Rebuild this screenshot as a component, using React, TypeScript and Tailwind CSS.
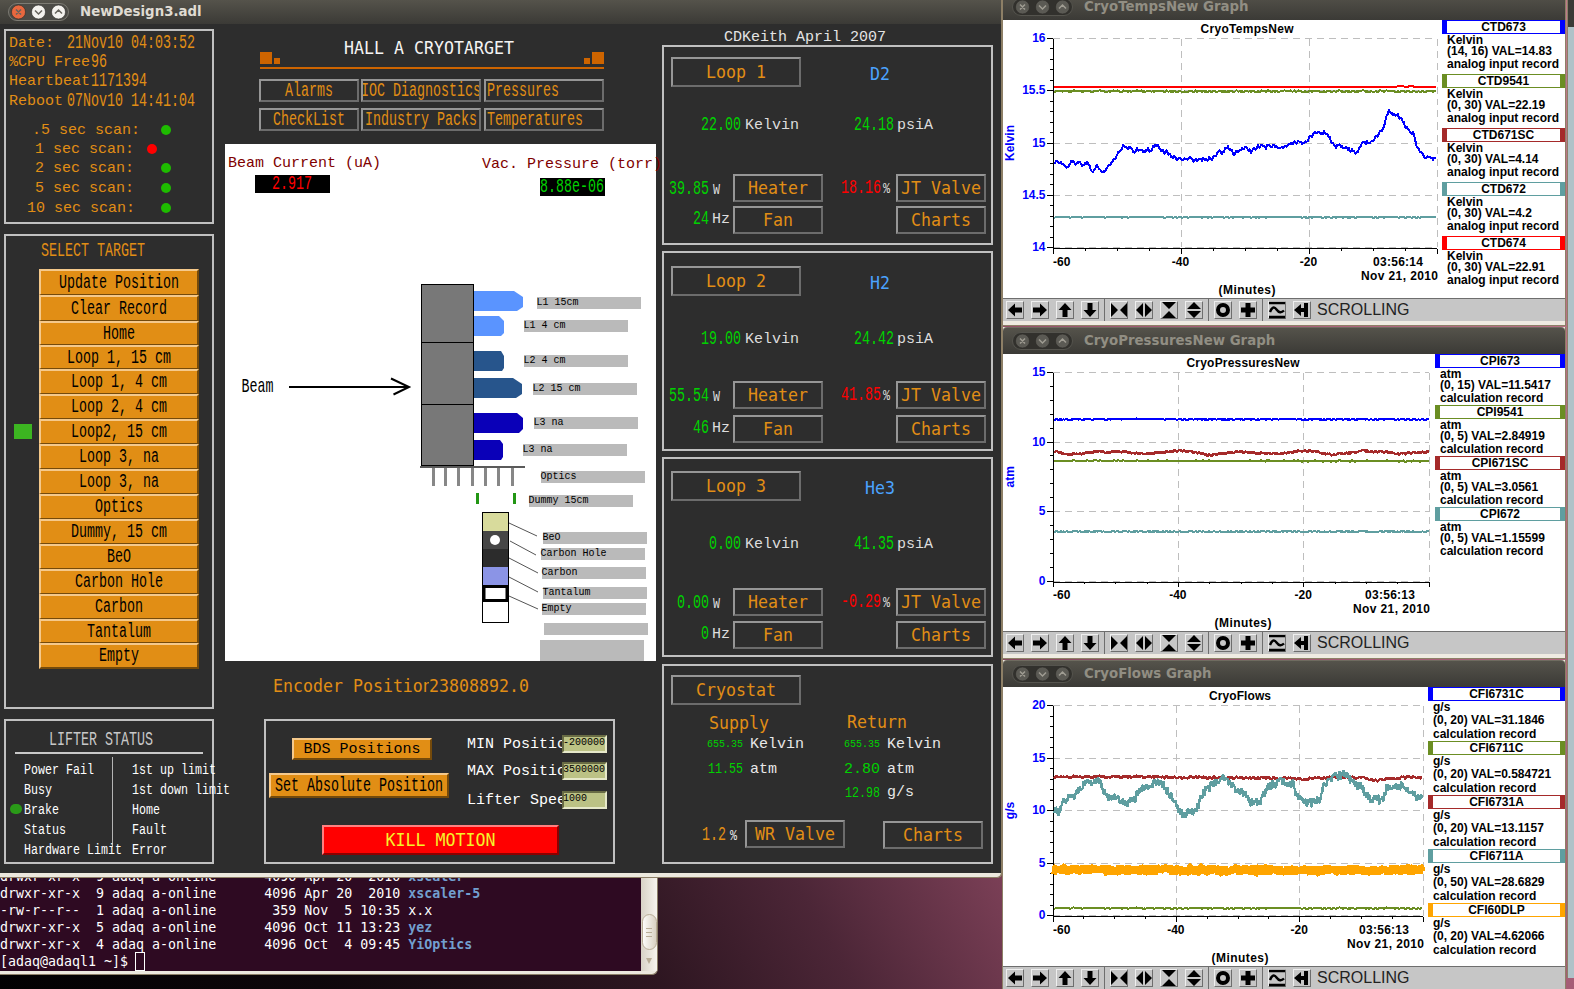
import type { ReactNode } from 'react'
import clsx from 'clsx'

// Fixed-advance screen fonts, keyed by cell width in pixels
const fonts = {
  6: "font-['Liberation_Mono',monospace] text-[10px] translate-y-px scale-y-110",
  7: "font-['Liberation_Mono',monospace] text-[11.67px] translate-y-px scale-y-[1.22]",
  8: "font-['Liberation_Mono',monospace] text-[13.33px] translate-y-px scale-y-[1.45]",
  9: "font-['Liberation_Mono',monospace] text-[15px] translate-y-px",
  10: "font-['DejaVu_Sans_Mono',monospace] text-[16.6px] translate-y-px scale-y-[1.07]",
}

type Cell = keyof typeof fonts

function T({ f, className, children }: { f: Cell; className?: string; children: ReactNode }) {
  return (
    <span className={clsx('inline-block shrink-0 origin-center align-top whitespace-pre leading-4', fonts[f], className)}>
      {children}
    </span>
  )
}

function Panel({ className, children }: { className?: string; children: ReactNode }) {
  return <section className={clsx('shrink-0 border-2 border-[#c0c0c0]', className)}>{children}</section>
}

function RelatedButton({ f = 10, className, children }: { f?: Cell; className?: string; children: ReactNode }) {
  return (
    <button
      className={clsx(
        'flex shrink-0 items-center overflow-hidden border-2 border-t-[#969696] border-r-[#6c6c6c] border-b-[#6c6c6c] border-l-[#969696] text-[#e18e15]',
        className,
      )}
    >
      <T f={f}>{children}</T>
    </button>
  )
}

function OrangeButton({ f = 8, className, children }: { f?: Cell; className?: string; children: ReactNode }) {
  return (
    <button
      className={clsx(
        'flex shrink-0 items-center justify-center border-2 border-t-[#f5c98b] border-r-[#744a0b] border-b-[#744a0b] border-l-[#f5c98b] bg-[#e18e15] text-black',
        className,
      )}
    >
      <T f={f}>{children}</T>
    </button>
  )
}

function WindowButtons({ active }: { active?: boolean }) {
  const rim = active ? '#f4f2ee' : '#5b5a54'
  const mark = active ? '#66635c' : '#a09d93'
  return (
    <svg width="61" height="18" viewBox="0 0 61 18" fill="none" className="shrink-0">
      <rect x="0.5" y="0.5" width="60" height="17" rx="8.5" fill={active ? '#4c4b46' : '#32312d'} stroke={active ? '#7d7b73' : '#55544e'} />
      <circle cx="10.5" cy="9" r="7" fill={active ? '#e9683f' : rim} stroke="#2b2a27" strokeWidth=".6" />
      <circle cx="30.5" cy="9" r="7" fill={rim} stroke="#2b2a27" strokeWidth=".6" />
      <circle cx="50.5" cy="9" r="7" fill={rim} stroke="#2b2a27" strokeWidth=".6" />
      <path d="M8 6.5l5 5M13 6.5l-5 5M27 7.5l3.5 3.5 3.5-3.5M47 10.5l3.5-3.5 3.5 3.5" stroke={mark} strokeWidth="1.5" />
    </svg>
  )
}

const targets: [string, string][] = [
  ['Update Position', 'h-[26px]'],
  ['Clear Record', 'h-[26px]'],
  ['Home', 'h-6'],
  ['Loop 1, 15 cm', 'h-6'],
  ['Loop 1, 4 cm', 'h-[25px]'],
  ['Loop 2, 4 cm', 'h-[25px]'],
  ['Loop2, 15 cm', 'h-[25px]'],
  ['Loop 3, na', 'h-[25px]'],
  ['Loop 3, na', 'h-[25px]'],
  ['Optics', 'h-[25px]'],
  ['Dummy, 15 cm', 'h-[25px]'],
  ['BeO', 'h-[25px]'],
  ['Carbon Hole', 'h-[25px]'],
  ['Carbon', 'h-[25px]'],
  ['Tantalum', 'h-6'],
  ['Empty', 'h-[26px]'],
]

const scans = [
  { label: '.5 sec scan:', pad: 'pl-[26px]', row: 'h-[19px]', gap: 'ml-[21px]' },
  { label: '1 sec scan:', pad: 'pl-[29px]', row: 'h-[19px]', gap: 'ml-[13px]', bad: true },
  { label: '2 sec scan:', pad: 'pl-[29px]', row: 'h-[19px]', gap: 'ml-[27px]' },
  { label: '5 sec scan:', pad: 'pl-[29px]', row: 'h-[21px]', gap: 'ml-[27px]' },
  { label: '10 sec scan:', pad: 'pl-[21px]', row: 'h-[19px]', gap: 'ml-[26px]' },
]

const lifter = [
  ['Power Fail', '1st up limit'],
  ['Busy', '1st down limit'],
  ['Brake', 'Home'],
  ['Status', 'Fault'],
  ['Hardware Limit', 'Error'],
]

function LeftColumn() {
  return (
    <div className="ml-1 w-[210px] shrink-0 pt-[5px] text-[#e18e15]">
      <Panel className="h-[195px] pt-0.5">
        <div className="flex h-[19px] items-center pl-[3px]">
          <T f={9} className="w-[58px]">Date:</T>
          <T f={8}>21Nov10 04:03:52</T>
        </div>
        <div className="flex h-[19px] items-center pl-[3px]">
          <T f={9} className="w-[82px]">%CPU Free</T>
          <T f={8}>96</T>
        </div>
        <div className="flex h-[19px] items-center pl-[3px]">
          <T f={9} className="w-[82px]">Heartbeat</T>
          <T f={8}>1171394</T>
        </div>
        <div className="flex h-[21px] items-center pl-[3px]">
          <T f={9} className="w-[58px]">Reboot</T>
          <T f={8}>07Nov10 14:41:04</T>
        </div>
        <div className="mt-[9px]">
          {scans.map((s) => (
            <div key={s.label} className={clsx('flex items-center', s.pad, s.row)}>
              <T f={9}>{s.label}</T>
              <span className={clsx('mt-px size-2.5 rounded-full', s.gap, s.bad ? 'bg-[#ff0000]' : 'bg-[#1ebb00]')} />
            </div>
          ))}
        </div>
      </Panel>

      <Panel className="mt-2.5 h-[475px] pt-[7px]">
        <T f={8} className="ml-[35px]">SELECT TARGET</T>
        <div className="mt-[10px]">
          {targets.map(([name, height], i) => (
            <div key={i} className={clsx('flex items-center', height)}>
              <span className={clsx('ml-2 h-[15px] w-[18px]', i === 6 && 'bg-[#3cb521]')} />
              <OrangeButton className={clsx('ml-[7px] w-40', height, i < 15 && 'border-b')}>{name}</OrangeButton>
            </div>
          ))}
        </div>
      </Panel>

      <Panel className="mt-2.5 h-[145px] pt-[11px] text-white">
        <T f={8} className="ml-[43px] text-[#c8c8c8]">LIFTER STATUS</T>
        <div className="mx-[9px] mt-1 h-0.5 bg-[#c8c8c8]" />
        <div className="mt-0.5 grid grid-cols-[107px_1fr] grid-rows-[repeat(5,20px)] items-center bg-[linear-gradient(#b4b4b4,#b4b4b4)] bg-[length:1px_90px] bg-[position:106px_1px] bg-no-repeat pt-[3px]">
          {lifter.map(([left, right]) => (
            <div key={left} className="contents">
              <div className="flex items-center">
                <span className={clsx('ml-1 h-2.5 w-3 shrink-0 rounded-full', left === 'Brake' && 'bg-[#2a9a18]')} />
                <T f={7} className="ml-0.5">{left}</T>
              </div>
              <T f={7} className="ml-[19px]">{right}</T>
            </div>
          ))}
        </div>
      </Panel>
    </div>
  )
}

const labels: [number, number, string][] = [
  [537, 297, 'L1 15cm'],
  [524, 320, 'L1 4 cm'],
  [524, 355, 'L2 4 cm'],
  [533, 383, 'L2 15 cm'],
  [534, 417, 'L3 na'],
  [523, 444, 'L3 na'],
  [541, 471, 'Optics'],
  [529, 495, 'Dummy 15cm'],
  [543, 532, 'BeO'],
  [541, 548, 'Carbon Hole'],
  [542, 567, 'Carbon'],
  [543, 587, 'Tantalum'],
  [542, 603, 'Empty'],
  [544, 623, ''],
]

function TargetDiagram() {
  return (
    <svg width="431" height="465" viewBox="225 196 431 465" className="block">
      <text transform="translate(241.500 392) scale(1 1.45)" className="font-['Liberation_Mono',monospace] text-[13.33px]">Beam</text>
      <path d="M289 387H408M391 378.5L409 387L393.5 394.5" stroke="#000" strokeWidth="2" fill="none" />

      <g fill="#787878" stroke="#000">
        <rect x="421.5" y="284.5" width="52" height="58" />
        <rect x="421.5" y="342.5" width="52" height="62" />
        <rect x="421.5" y="404.5" width="52" height="61" />
      </g>
      <g fill="#5a94ff">
        <path d="M474 291H514L523 297V307L517 311H474Z" />
        <path d="M474 316H499L504 321V333L501 336H474Z" />
      </g>
      <g fill="#27558c">
        <path d="M474 351H501L504 356V368L502 371H474Z" />
        <path d="M474 378H513L522 384V394L516 398H474Z" />
      </g>
      <g fill="#0a00b8">
        <path d="M474 413H517L523 418V429L519 433H474Z" />
        <path d="M474 440H500L503 444V457L501 460H474Z" />
      </g>

      <rect x="420" y="466" width="105" height="2" fill="#5a5a5a" />
      {[432, 444, 457, 471, 484, 497, 511].map((x) => (
        <rect key={x} x={x} y="468" width="3" height="18" fill="#878787" />
      ))}
      <path d="M476 493h3v11h-3zM513 493h3v11h-3z" fill="#229614" />

      <rect x="482.5" y="512.5" width="26" height="110" fill="#fff" stroke="#000" />
      <rect x="483" y="513" width="25" height="18" fill="#d8db9c" />
      <rect x="483" y="531" width="25" height="18" fill="#464646" />
      <circle cx="495" cy="540" r="5" fill="#fff" />
      <rect x="483" y="549" width="25" height="18" fill="#2c2c2c" />
      <rect x="483" y="567" width="25" height="18" fill="#8b94e6" />
      <rect x="484" y="586.5" width="23" height="14" fill="#fff" stroke="#000" strokeWidth="3" />
      <path d="M509 523L537 536M510 541L536 555M509 558L538 573M509 577L538 592M509 596L538 609" stroke="#555" />

      {labels.map(([x, y, text]) => (
        <g key={y}>
          <rect x={x} y={y} width="104" height="12" fill="#bababa" />
          <text x={x - 0.5} y={y + 8} className="font-['Liberation_Mono',monospace] text-[10px] whitespace-pre">{text}</text>
        </g>
      ))}
      <rect x="540" y="640" width="104" height="21" fill="#bababa" />
    </svg>
  )
}

function Limit({ label, value, className }: { label: string; value: string; className?: string }) {
  return (
    <div className={clsx('flex h-[18px] items-center', className)}>
      <div className="flex h-[18px] w-[95px] items-center overflow-hidden"><T f={9}>{label}</T></div>
      <div className="flex h-[18px] w-[45px] items-start overflow-hidden border-2 border-t-[#686b44] border-r-[#e6e8ca] border-b-[#e6e8ca] border-l-[#686b44] bg-[#bcc285] text-black">
        <T f={6} className="-mt-[3px] -ml-px">{value}</T>
      </div>
    </div>
  )
}

function CenterColumn() {
  return (
    <div className="w-[448px] shrink-0">
      <div className="ml-[46px] flex h-[45px] w-[344px] items-end justify-between border-b-2 border-[#cd6400] pb-[3px]">
        <div className="flex items-end gap-0.5">
          <span className="size-3 bg-[#cd6400]" />
          <span className="size-1.5 bg-[#cd6400]" />
        </div>
        <T f={10} className="mr-[6px] mb-2 text-[#f4f4f4]">HALL A CRYOTARGET</T>
        <div className="flex items-end gap-0.5">
          <span className="size-1.5 bg-[#cd6400]" />
          <span className="size-3 bg-[#cd6400]" />
        </div>
      </div>

      <div className="mt-2.5 ml-[45px] grid grid-cols-[102px_123px_120px] gap-y-1.5">
        <RelatedButton f={8} className="h-[23px] w-[100px] justify-center">Alarms</RelatedButton>
        <RelatedButton f={8} className="h-[23px] w-[120px] justify-center">IOC Diagnostics</RelatedButton>
        <RelatedButton f={8} className="h-[23px] w-[120px] pl-px">Pressures</RelatedButton>
        <RelatedButton f={8} className="h-[23px] w-[100px] justify-center">CheckList</RelatedButton>
        <RelatedButton f={8} className="h-[23px] w-[120px] justify-center">Industry Packs</RelatedButton>
        <RelatedButton f={8} className="h-[23px] w-[120px] pl-px">Temperatures</RelatedButton>
      </div>

      <div className="mt-[13px] ml-[11px] h-[517px] w-[431px] bg-white">
        <div className="flex h-[31px] pt-[11px] pl-[3px] text-[#800000]">
          <T f={9} className="w-[254px]">Beam Current (uA)</T>
          <T f={9} className="mt-px">Vac. Pressure (torr)</T>
        </div>
        <div className="flex h-[21px] items-start pl-[30px]">
          <div className="flex h-[18px] w-[75px] items-center bg-black pl-[17px] text-[#f00]"><T f={8}>2.917</T></div>
          <div className="mt-[3px] ml-[210px] flex h-[18px] w-[65px] items-center bg-black text-[#00d200]"><T f={8}>8.88e-06</T></div>
        </div>
        <TargetDiagram />
      </div>

      <div className="mt-[17px] ml-[59px] flex h-4 text-[#e18e15]">
        <div className="-my-1 flex w-[156px] overflow-hidden py-1"><T f={10}>Encoder Position</T></div>
        <T f={10}>23808892.0</T>
      </div>

      <Panel className="mt-[25px] ml-[50px] h-[145px] w-[351px]">
        <div className="flex h-[88px]">
          <div className="w-[201px] pt-[17px]">
            <OrangeButton f={9} className="ml-[26px] h-[22px] w-[140px] pb-px">BDS Positions</OrangeButton>
            <OrangeButton className="mt-[13px] ml-[3px] h-[25px] w-[180px]">Set Absolute Position</OrangeButton>
          </div>
          <div className="pt-[14px] text-white">
            <Limit label="MIN Position" value="-200000." />
            <Limit label="MAX Position" value="3500000." className="mt-[9px]" />
            <Limit label="Lifter Speed" value="1000" className="mt-[11px]" />
          </div>
        </div>
        <button className="mt-4 ml-14 flex h-[30px] w-[237px] items-center justify-center border-2 border-t-[#ff8080] border-r-[#8c0000] border-b-[#8c0000] border-l-[#ff8080] bg-[#ff0000] text-[#f5f32a]">
          <T f={10}>KILL MOTION</T>
        </button>
      </Panel>
    </div>
  )
}

interface LoopData {
  name: string
  gas: string
  temp: string
  pressure: string
  heater: string
  fan: string
  valve: string
  gaps: string[]
}

const loops: LoopData[] = [
  { name: 'Loop 1', gas: 'D2', temp: '22.00', pressure: '24.18', heater: '39.85', fan: '24', valve: '18.16', gaps: ['mt-[10px]', 'mt-[30px]', 'mt-[41px]', 'mt-1'] },
  { name: 'Loop 2', gas: 'H2', temp: '19.00', pressure: '24.42', heater: '55.54', fan: '46', valve: '41.85', gaps: ['mt-[13px]', 'mt-[35px]', 'mt-[34px]', 'mt-1.5'] },
  { name: 'Loop 3', gas: 'He3', temp: '0.00', pressure: '41.35', heater: '0.00', fan: '0', valve: '-0.29', gaps: ['mt-[12px]', 'mt-[35px]', 'mt-[36px]', 'mt-[5px]'] },
]

function Reading({ f = 8, className, children }: { f?: Cell; className?: string; children: ReactNode }) {
  return (
    <div className={clsx('flex shrink-0 justify-end', className)}>
      <T f={f}>{children}</T>
    </div>
  )
}

function Loop({ loop, className }: { loop: LoopData; className?: string }) {
  const [a, b, c, d] = loop.gaps
  return (
    <Panel className={clsx('flex h-[200px] flex-col text-[#ddd]', className)}>
      <div className={clsx('flex h-[30px] items-center', a)}>
        <RelatedButton className="ml-[7px] h-[30px] w-[130px] justify-center">{loop.name}</RelatedButton>
        <div className="ml-[54px] flex w-[50px] justify-center pt-[3px] text-[#4ba3ff]"><T f={10}>{loop.gas}</T></div>
      </div>
      <div className={clsx('flex h-4', b)}>
        <Reading className="w-[77px] text-[#00d200]">{loop.temp}</Reading>
        <T f={9} className="ml-1 w-[75px]">Kelvin</T>
        <Reading className="w-[74px] text-[#00d200]">{loop.pressure}</Reading>
        <T f={9} className="ml-[3px]">psiA</T>
      </div>
      <div className={clsx('flex h-7 items-center', c)}>
        <Reading className="mt-0.5 w-[45px] text-[#00d200]">{loop.heater}</Reading>
        <T f={7} className="mt-px w-6 pl-[4px]">W</T>
        <RelatedButton className="h-7 w-[90px] justify-center">Heater</RelatedButton>
        <Reading className="w-[58px] text-[#f00]">{loop.valve}</Reading>
        <T f={7} className="w-[15px] pl-[2px]">%</T>
        <RelatedButton className="h-7 w-[90px] justify-center">JT Valve</RelatedButton>
      </div>
      <div className={clsx('flex h-7 items-center', d)}>
        <Reading className="-mt-[3px] w-[45px] text-[#00d200]">{loop.fan}</Reading>
        <T f={9} className="-mt-0.5 w-6 pl-[3px]">Hz</T>
        <RelatedButton className="h-7 w-[90px] justify-center">Fan</RelatedButton>
        <RelatedButton className="ml-[73px] h-7 w-[90px] justify-center">Charts</RelatedButton>
      </div>
    </Panel>
  )
}

function RightColumn() {
  return (
    <div className="w-[331px] shrink-0">
      <div className="flex h-[21px] items-center pt-[4px] pl-[62px] text-[#e4e4e4]"><T f={9}>CDKeith April 2007</T></div>
      <Loop loop={loops[0]} />
      <Loop loop={loops[1]} className="mt-1.5" />
      <Loop loop={loops[2]} className="mt-1.5" />
      <Panel className="mt-[7px] h-[200px] pt-[9px] text-[#e8e8e8]">
        <RelatedButton className="ml-[7px] h-[30px] w-[130px] justify-center">Cryostat</RelatedButton>
        <div className="mt-[10px] flex h-4 text-[#e18e15]">
          <T f={10} className="ml-[45px] w-[138px]">Supply</T>
          <T f={10} className="-mt-px">Return</T>
        </div>
        <div className="mt-[5px] grid grid-cols-[79px_65px_72px_1fr] grid-rows-[25px_23px_16px]">
          <Reading f={6} className="text-[#00d200]">655.35</Reading>
          <T f={9} className="ml-[7px]">Kelvin</T>
          <Reading f={6} className="text-[#00d200]">655.35</Reading>
          <T f={9} className="ml-[7px]">Kelvin</T>
          <Reading f={7} className="text-[#00d200]">11.55</Reading>
          <T f={9} className="ml-[7px]">atm</T>
          <Reading f={9} className="text-[#00d200]">2.80</Reading>
          <T f={9} className="ml-[7px]">atm</T>
          <Reading f={7} className="col-start-3 text-[#00d200]">12.98</Reading>
          <T f={9} className="ml-[7px]">g/s</T>
        </div>
        <div className="mt-[19px] flex items-center">
          <T f={8} className="mt-px ml-[38px] text-[#e18e15]">1.2</T>
          <T f={7} className="mt-px ml-1 w-[15px]">%</T>
          <RelatedButton className="h-7 w-[100px] justify-center">WR Valve</RelatedButton>
          <RelatedButton className="mt-0.5 ml-[38px] h-7 w-[100px] justify-center">Charts</RelatedButton>
        </div>
      </Panel>
    </div>
  )
}

const listing = [
  ['drwxr-xr-x  9 adaq a-online      4096 Apr 20  2010 ', 'xscaler', true],
  ['drwxr-xr-x  9 adaq a-online      4096 Apr 20  2010 ', 'xscaler-5', true],
  ['-rw-r--r--  1 adaq a-online       359 Nov  5 10:35 ', 'x.x', false],
  ['drwxr-xr-x  5 adaq a-online      4096 Oct 11 13:23 ', 'yez', true],
  ['drwxr-xr-x  4 adaq a-online      4096 Oct  4 09:45 ', 'YiOptics', true],
] as const

function TerminalWindow() {
  return (
    <div className="absolute top-[860px] left-0 flex h-[115px] w-[658px] flex-col overflow-hidden rounded-br-md border-r border-b border-[#8c7f68] bg-[#ece8de]">
      <div className="flex h-[111px]">
        <div className="w-[641px] bg-[#2e0a22] pt-2 font-['DejaVu_Sans_Mono',monospace] text-[13.3px] leading-[17px] whitespace-pre text-white">
          {listing.map(([meta, name, dir]) => (
            <div key={name} className="h-[17px]">
              {meta}
              <span className={clsx(dir && 'font-bold text-[#729fcf]')}>{name}</span>
            </div>
          ))}
          <div className="flex h-[18px]">
            [adaq@adaql1 ~]$
            <span className="-mt-px ml-[7px] h-[19px] w-2.5 border border-white" />
          </div>
        </div>
        <div className="flex flex-1 flex-col items-center bg-gradient-to-r from-[#d8d2c6] to-[#f7f4ee] pt-[54px]">
          <div className="flex h-9 w-[15px] flex-col items-center justify-center gap-[3px] rounded-full border border-[#b9ad97] bg-gradient-to-r from-[#fdfcfa] to-[#d9d1c2]">
            <span className="h-px w-1.5 bg-[#b9ad97]" />
            <span className="h-px w-1.5 bg-[#b9ad97]" />
            <span className="h-px w-1.5 bg-[#b9ad97]" />
          </div>
          <svg width="6" height="6" viewBox="0 0 6 6" className="mt-2"><path d="M0 0h6L3 6z" fill="#b9ad97" /></svg>
        </div>
      </div>
    </div>
  )
}

type Pt = [number, number]

// cheap repeatable noise in -1..1
const rnd = (i: number) => {
  const s = Math.sin(i * 127.1 + 31.7) * 43758.5453
  return (s - Math.floor(s)) * 2 - 1
}

function trace(pts: Pt[], noise: number, step = 2.73, sparse = 0) {
  let d = ''
  let k = 0
  let n = 0
  for (let x = pts[0][0]; x <= pts[pts.length - 1][0]; x += step) {
    while (k < pts.length - 2 && pts[k + 1][0] < x) k++
    const [x0, y0] = pts[k]
    const [x1, y1] = pts[k + 1]
    const r = rnd(++n)
    const y = y0 + ((y1 - y0) * (x - x0)) / (x1 - x0) + (Math.abs(r) < sparse ? 0 : r * noise)
    d += `${d ? 'L' : 'M'}${x.toFixed(1)} ${y.toFixed(1)}`
  }
  return d
}

interface Series {
  color: string
  d: string
  width?: number
}

interface Graph {
  title: string
  windowTitle: string
  titleW: number
  unit: string
  time: string
  plotW: number
  plotTop: number
  plotH: number
  yLabels: string[]
  minor: number
  h: number
  dy: number
  series: Series[]
  legendW: string
  rows: string[]
  legend: { name: string; color: string; unit: string; range: string; record: string }[]
}

const blue = '#0000ff'
const olive = '#6b8e23'
const brown = '#a52a2a'
const teal = '#5f9ea0'

const graphs: Graph[] = [
  {
    title: 'CryoTempsNew', windowTitle: 'CryoTempsNew Graph', titleW: 93, unit: 'Kelvin', time: '03:56:14',
    plotW: 384, plotTop: 18.5, plotH: 209, yLabels: ['16', '15.5', '15', '14.5', '14'], minor: 20, h: 278, dy: 20,
    series: [
      { color: olive, d: trace([[148, 274], [1191, 274]], 3.5) },
      { color: '#ff0000', d: 'M148 261H1083L1086 258H1102L1106 261H1116L1118 258H1128L1132 261H1191' },
      { color: brown, d: 'M148 654H1191', width: 1 },
      { color: teal, d: trace([[148, 652], [1191, 652]], 2.5, 2.73, 0.7) },
      {
        color: blue,
        d: trace([[148, 485], [160, 488], [172, 492], [183, 507], [195, 480], [205, 497], [215, 486], [225, 495], [240, 489], [250, 512], [258, 514], [265, 495], [272, 515], [283, 518], [292, 500], [305, 490], [318, 472], [335, 438], [345, 445], [360, 442], [365, 462], [375, 450], [390, 455], [405, 448], [410, 458], [420, 438], [432, 440], [440, 452], [455, 456], [470, 470], [490, 476], [500, 474], [515, 474], [530, 482], [550, 480], [570, 476], [585, 474], [597, 452], [608, 460], [618, 438], [630, 448], [640, 462], [655, 452], [668, 440], [685, 455], [705, 438], [725, 442], [745, 438], [775, 446], [800, 430], [835, 424], [860, 400], [890, 396], [915, 438], [935, 440], [975, 457], [990, 432], [1015, 424], [1030, 405], [1043, 395], [1053, 365], [1062, 332], [1072, 345], [1085, 342], [1100, 365], [1115, 390], [1130, 402], [1140, 440], [1160, 470], [1180, 475], [1191, 480]], 7),
      },
    ],
    legendW: 'w-[123px]',
    rows: ['h-2.5', 'h-[11px]', 'mb-[3px] h-4'],
    legend: [
      { name: 'CTD673', color: 'border-[#0000ff]', unit: 'Kelvin', range: '(14, 16) VAL=14.83', record: 'analog input record' },
      { name: 'CTD9541', color: 'border-[#6b8e23]', unit: 'Kelvin', range: '(0, 30) VAL=22.19', record: 'analog input record' },
      { name: 'CTD671SC', color: 'border-[#a52a2a]', unit: 'Kelvin', range: '(0, 30) VAL=4.14', record: 'analog input record' },
      { name: 'CTD672', color: 'border-[#5f9ea0]', unit: 'Kelvin', range: '(0, 30) VAL=4.2', record: 'analog input record' },
      { name: 'CTD674', color: 'border-[#ff0000]', unit: 'Kelvin', range: '(0, 30) VAL=22.91', record: 'analog input record' },
    ],
  },
  {
    title: 'CryoPressuresNew', windowTitle: 'CryoPressuresNew Graph', titleW: 113, unit: 'atm', time: '03:56:13',
    plotW: 376, plotTop: 18.5, plotH: 208.5, yLabels: ['15', '10', '5', '0'], minor: 15, h: 277, dy: 29,
    series: [
      { color: blue, d: trace([[148, 284], [400, 282], [560, 283], [1172, 283]], 2) },
      { color: olive, d: trace([[148, 407], [1172, 408]], 3, 2.73, 0.85) },
      {
        color: brown, width: 2.5,
        d: trace([[148, 378], [180, 388], [210, 388], [260, 380], [300, 382], [335, 380], [380, 387], [440, 383], [480, 377], [500, 376], [540, 384], [575, 391], [610, 384], [660, 380], [720, 386], [780, 386], [830, 376], [860, 380], [910, 389], [950, 384], [990, 378], [1040, 380], [1090, 387], [1130, 382], [1172, 380]], 3.5),
      },
      { color: teal, d: trace([[148, 620], [1172, 620]], 2.5) },
    ],
    legendW: 'w-[130px]',
    rows: ['h-2.5', 'h-[11px]', 'h-4'],
    legend: [
      { name: 'CPI673', color: 'border-[#0000ff]', unit: 'atm', range: '(0, 15) VAL=11.5417', record: 'calculation record' },
      { name: 'CPI9541', color: 'border-[#6b8e23]', unit: 'atm', range: '(0, 5) VAL=2.84919', record: 'calculation record' },
      { name: 'CPI671SC', color: 'border-[#a52a2a]', unit: 'atm', range: '(0, 5) VAL=3.0561', record: 'calculation record' },
      { name: 'CPI672', color: 'border-[#5f9ea0]', unit: 'atm', range: '(0, 5) VAL=1.15599', record: 'calculation record' },
    ],
  },
  {
    title: 'CryoFlows', windowTitle: 'CryoFlows Graph', titleW: 62, unit: 'g/s', time: '03:56:13',
    plotW: 370, plotTop: 18.5, plotH: 210, yLabels: ['20', '15', '10', '5', '0'], minor: 20, h: 279, dy: 32,
    series: [
      { color: olive, d: trace([[148, 760], [1155, 760]], 3, 2.73, 0.6) },
      { color: brown, d: trace([[148, 366], [400, 366], [700, 369], [830, 372], [920, 365], [990, 369], [1035, 376], [1120, 365], [1155, 367]], 4.5), width: 2.5 },
      {
        color: teal, width: 2.5,
        d: trace([[148, 460], [160, 478], [172, 440], [200, 425], [230, 390], [255, 378], [272, 380], [290, 425], [320, 432], [345, 448], [365, 435], [385, 400], [425, 382], [445, 388], [465, 420], [485, 455], [500, 480], [520, 470], [538, 465], [550, 420], [580, 390], [610, 372], [630, 390], [660, 410], [685, 440], [715, 436], [730, 395], [765, 380], [800, 385], [812, 428], [845, 444], [875, 430], [882, 390], [900, 375], [920, 365], [940, 356], [960, 378], [990, 400], [1010, 432], [1045, 435], [1055, 400], [1080, 395], [1105, 390], [1130, 420], [1155, 430]], 14, 2),
      },
      { color: '#ffa500', d: trace([[148, 645], [1155, 645]], 14, 1.3), width: 6 },
    ],
    legendW: 'w-[137px]',
    rows: ['h-2.5', 'h-[15px]', 'mb-0.5 h-[13px]'],
    legend: [
      { name: 'CFI6731C', color: 'border-[#0000ff]', unit: 'g/s', range: '(0, 20) VAL=31.1846', record: 'calculation record' },
      { name: 'CFI6711C', color: 'border-[#6b8e23]', unit: 'g/s', range: '(0, 20) VAL=0.584721', record: 'calculation record' },
      { name: 'CFI6731A', color: 'border-[#a52a2a]', unit: 'g/s', range: '(0, 20) VAL=13.1157', record: 'calculation record' },
      { name: 'CFI6711A', color: 'border-[#5f9ea0]', unit: 'g/s', range: '(0, 50) VAL=28.6829', record: 'calculation record' },
      { name: 'CFI60DLP', color: 'border-[#ffa500]', unit: 'g/s', range: '(0, 20) VAL=4.62066', record: 'calculation record' },
    ],
  },
]

interface LabelProps {
  x: number
  y: number
  anchor?: 'start' | 'middle' | 'end'
  w?: number
  fill?: string
  rotate?: boolean
  children: string
}

// y is the middle of the capitals
function Label({ x, y, anchor = 'start', w, fill = '#000', rotate, children }: LabelProps) {
  return (
    <text
      transform={`translate(${x} ${y})${rotate ? ' rotate(-90)' : ''} scale(1 1.14)`}
      y={3.5}
      fill={fill}
      textAnchor={anchor}
      textLength={w}
      className="font-['Liberation_Sans',sans-serif] text-[12px] font-bold"
    >
      {children}
    </text>
  )
}

function Plot({ g }: { g: Graph }) {
  const left = 50
  const right = left + g.plotW
  const top = g.plotTop
  const bottom = top + g.plotH
  const mid = left + g.plotW / 2 + 2
  return (
    <svg width={right + 4} height={g.h} className="shrink-0">
      <g stroke="#bebebe" strokeDasharray="7 5" shapeRendering="crispEdges">
        {g.yLabels.map((l, i) => {
          const y = top + (g.plotH * i) / (g.yLabels.length - 1)
          return <line key={l} x1={left} x2={right} y1={y} y2={y} />
        })}
        {[0, 1, 2, 3].map((i) => {
          const x = left + (g.plotW * i) / 3
          return <line key={i} x1={x} x2={x} y1={top} y2={bottom} />
        })}
      </g>
      <g stroke="#000" shapeRendering="crispEdges">
        <line x1={left} x2={left} y1={top} y2={bottom + 1} />
        <line x1={left} x2={right} y1={bottom + 1} y2={bottom + 1} />
        {Array.from({ length: g.minor + 1 }, (_, i) => {
          const y = top + (g.plotH * i) / g.minor
          const major = i % 5 === 0
          return <line key={i} x1={left - (major ? 6 : 3)} x2={left} y1={y} y2={y} />
        })}
        {Array.from({ length: 13 }, (_, i) => {
          const x = left + (g.plotW * i) / 12
          return <line key={i} x1={x} x2={x} y1={bottom + 1} y2={bottom + (i % 4 === 0 ? 6 : 3)} />
        })}
      </g>
      <g transform={`translate(-3 ${-g.dy}) scale(.36607 .33333)`} fill="none" strokeLinejoin="bevel">
        {g.series.map((s) => (
          <path key={s.color} d={s.d} stroke={s.color} strokeWidth={s.width ?? 2} vectorEffect="non-scaling-stroke" shapeRendering="crispEdges" />
        ))}
      </g>
      {g.yLabels.map((l, i) => (
        <Label key={l} x={42.5} y={top + (g.plotH * i) / (g.yLabels.length - 1) - 0.5} anchor="end" fill={blue}>{l}</Label>
      ))}
      <Label x={7} y={top + g.plotH / 2} anchor="middle" fill={blue} rotate>{g.unit}</Label>
      <Label x={mid} y={8.7} anchor="middle" w={g.titleW}>{g.title}</Label>
      <Label x={left} y={bottom + 14}>-60</Label>
      <Label x={left + g.plotW / 3 - 0.5} y={bottom + 14} anchor="middle">-40</Label>
      <Label x={left + (g.plotW * 2) / 3 - 0.5} y={bottom + 14} anchor="middle">-20</Label>
      <Label x={right - 64} y={bottom + 14} w={50}>{g.time}</Label>
      <Label x={right - 76} y={bottom + 28} w={77}>Nov 21, 2010</Label>
      <Label x={mid} y={bottom + 42} anchor="middle" w={57}>(Minutes)</Label>
    </svg>
  )
}

const tools = [
  'M2 9L9 2.5V6.5H16V11.5H9V15.5Z',
  'M16 9L9 2.5V6.5H2V11.5H9V15.5Z',
  'M9 2L15.5 9H11.5V16H6.5V9H2.5Z',
  'M9 16L15.5 9H11.5V2H6.5V9H2.5Z',
  '|',
  'M1 2V16L8 9ZM17 2V16L10 9Z',
  'M8 2V16L1 9ZM10 2V16L17 9Z',
  'M2 1H16L9 8ZM2 17H16L9 10Z',
  'M2 8H16L9 1ZM2 10H16L9 17Z',
  '|',
  'M9 2A7 7 0 1 0 9 16A7 7 0 1 0 9 2ZM9 6A3 3 0 1 1 9 12A3 3 0 1 1 9 6Z',
  'M6.5 2H11.5V6.5H16V11.5H11.5V16H6.5V11.5H2V6.5H6.5Z',
  '|',
  'wave',
  'M1 9L8 3V7H11V2H15V16H11V11H8V15Z',
]

function Toolbar() {
  return (
    <div className="flex h-[23px] shrink-0 items-center border-t border-[#6e6e6e] bg-[#c6c6c6] pl-[3px]">
      {tools.map((d, i) =>
        d === '|' ? (
          <span key={i} className="mr-[5px] -ml-0.5 h-full w-px shrink-0 bg-[#6e6e6e]" />
        ) : (
          <span key={i} className="mr-[7px] mb-px size-[18px] shrink-0 border border-t-[#efefef] border-r-[#6e6e6e] border-b-[#6e6e6e] border-l-[#efefef]">
            <svg viewBox="0 0 18 18" className="-m-px size-[18px] max-w-none">
              {d === 'wave' ? (
                <path d="M1 2H17M1 16H17M2 11Q5 3.500 8.500 8.500T16 9.500" fill="none" stroke="#000" strokeWidth="2.4" />
              ) : (
                <path d={d} fillRule="evenodd" />
              )}
            </svg>
          </span>
        ),
      )}
      <span className="-ml-px font-['Liberation_Sans',sans-serif] text-base leading-4 text-[#222]">SCROLLING</span>
    </div>
  )
}

function GraphWindow({ g, className }: { g: Graph; className: string }) {
  return (
    <div className={clsx('absolute left-[1002px] flex w-[564px] flex-col border-x border-[#8d7f66] bg-[#efebe2]', className)}>
      <div className="flex h-[27px] shrink-0 items-center rounded-t-sm border-t border-[#6f6c60] bg-gradient-to-b from-[#55534b] to-[#3b3a36] pl-[9px]">
        <WindowButtons />
        <span className="ml-[11px] font-['DejaVu_Sans',sans-serif] text-[13.33px] leading-4 font-bold whitespace-nowrap text-[#918e83]">{g.windowTitle}</span>
      </div>
      <div className="flex justify-between overflow-hidden bg-white">
        <Plot g={g} />
        <div className={clsx("shrink-0 font-['Liberation_Sans',sans-serif] text-[12px] font-bold whitespace-nowrap text-black", g.legendW)}>
          {g.legend.map((l) => (
            <div key={l.name}>
              <div className={clsx('flex h-[14px] items-center justify-center border-x-[5px] border-y bg-white', l.color)}>
                <span className="-translate-y-px scale-y-[1.14] leading-3">{l.name}</span>
              </div>
              {[l.unit, l.range, l.record].map((text, i) => (
                <div key={text} className={clsx('flex items-center pl-[5px]', g.rows[i])}>
                  <span className="scale-y-[1.14] leading-3">{text}</span>
                </div>
              ))}
            </div>
          ))}
        </div>
      </div>
      <Toolbar />
      <div className="h-[5px] shrink-0 border-b border-[#8d7f66]" />
    </div>
  )
}

export default function App() {
  return (
    <main className="relative h-[989px] w-[1574px] overflow-hidden bg-[linear-gradient(60deg,#020102_0%,#0e070b_15%,#2e1621_31%,#4c2637_40%,#7c4057_50%,#a85f78_75%,#c07a8c_100%)] leading-4">
      <TerminalWindow />

      <div className="absolute top-0 left-0 h-[878px] w-[1003px] rounded-br-md border-r-2 border-b border-[#8d7f66] bg-[#ece8de]">
        <div className="flex h-6 items-center bg-gradient-to-b from-[#55534b] to-[#3b3a36] pb-px pl-2">
          <WindowButtons active />
          <span className="ml-[11px] font-['DejaVu_Sans',sans-serif] text-[13.33px] leading-4 font-bold text-[#dfdbd2]">NewDesign3.adl</span>
        </div>
        <div className="flex h-[849px] bg-[#2d2d2d]">
          <LeftColumn />
          <CenterColumn />
          <RightColumn />
        </div>
      </div>

      <GraphWindow g={graphs[0]} className="-top-[7px]" />
      <GraphWindow g={graphs[1]} className="top-[327px]" />
      <GraphWindow g={graphs[2]} className="top-[660px]" />

      <div className="absolute top-0 left-[1567px] h-[978px] w-[7px] border-l border-[#8d7f66] bg-[#b0c2c8]">
        <div className="h-[27px] bg-[#3b3a36]" />
      </div>
    </main>
  )
}
